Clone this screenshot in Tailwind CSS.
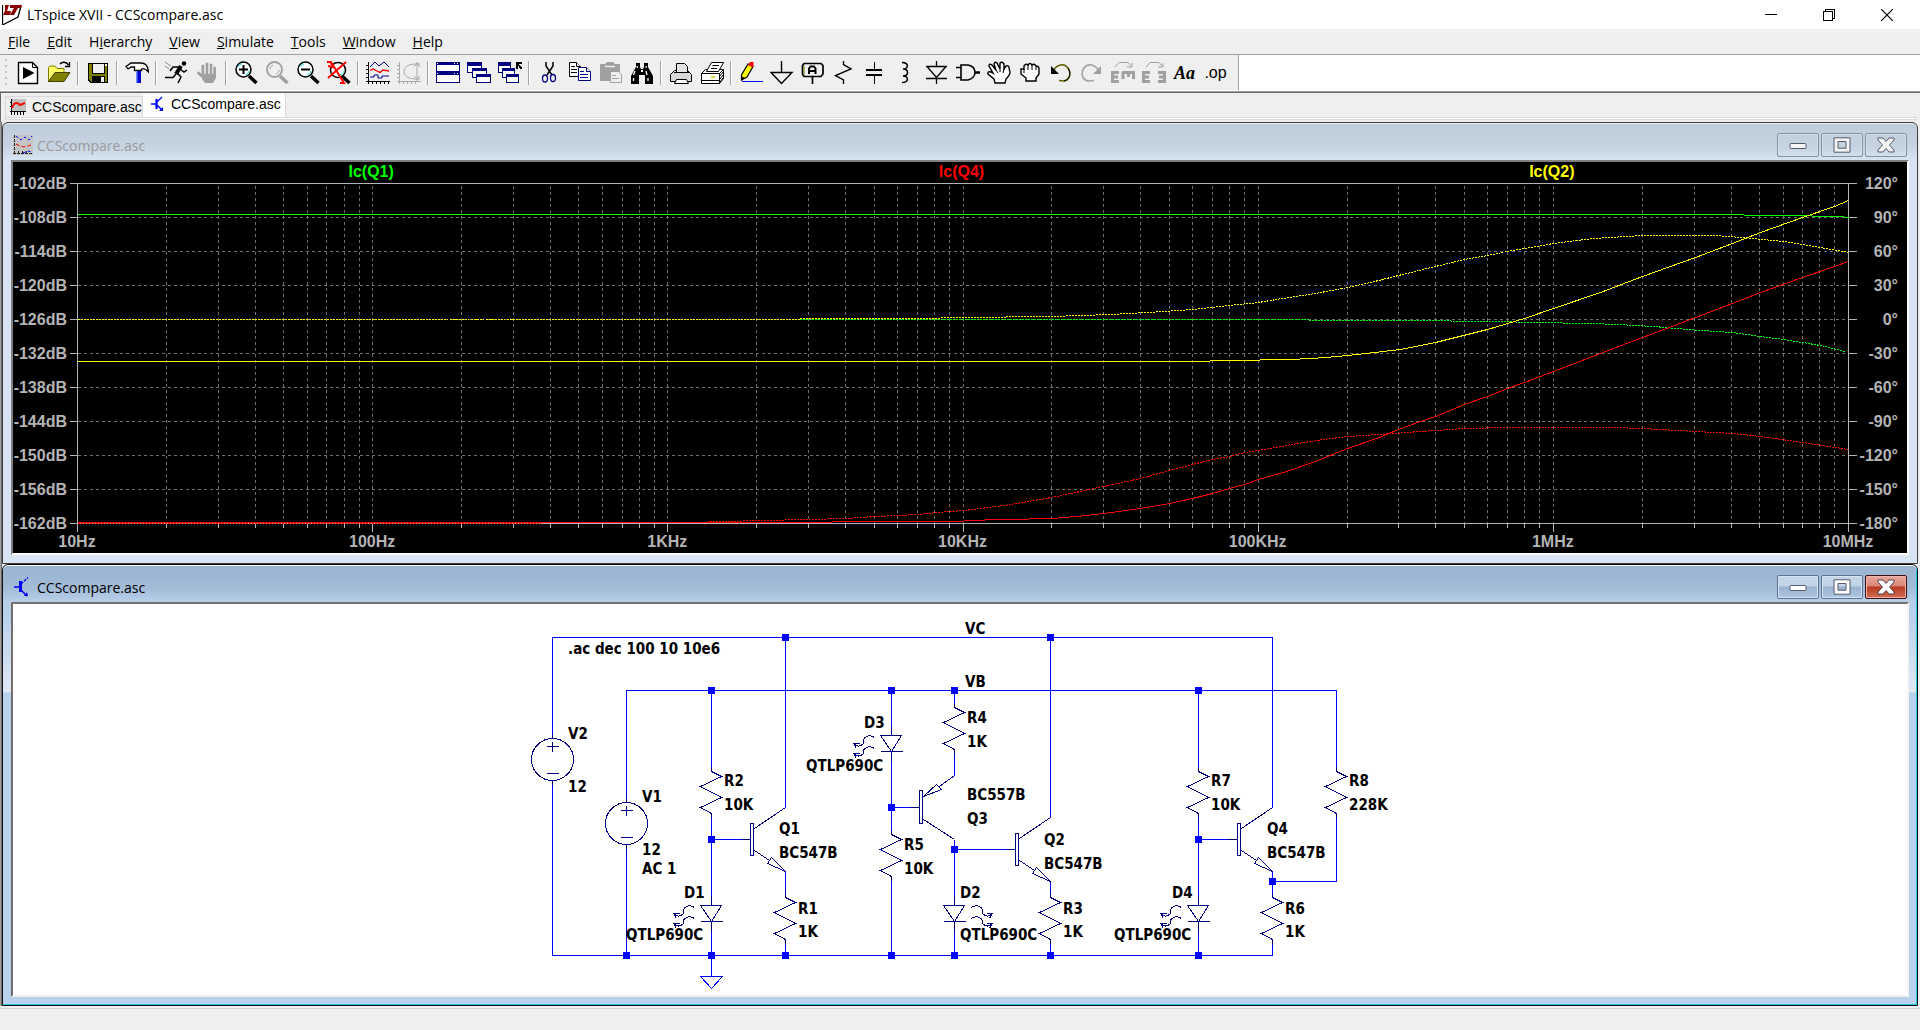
<!DOCTYPE html>
<html lang="en">
<head>
    <meta charset="UTF-8">
    <meta name="viewport" content="width=device-width, initial-scale=1.0">
    <title>LTspice XVII - CCScompare.asc</title>
    <script src="https://cdn.jsdelivr.net/npm/@tailwindcss/browser@4"></script>
</head>
<body class="h-screen flex flex-col overflow-hidden bg-[#efefef] text-black text-[14px] font-['Open_Sans','Noto_Sans',sans-serif]">

    <!-- Title bar -->
    <header class="h-[29px] shrink-0 bg-white flex items-center pl-[2px]">
        <svg class="w-5 h-5" viewBox="0 0 20 20">
            <path d="M.5 0V20L16 12 19 1" fill="none" stroke="#000" stroke-width="1.3"/>
            <path d="M3 0H7L5 6 9 6 8 10H1L3 6ZM8 0H20L19 3H16L12 10H8L12 3H8Z" fill="#8b0000"/>
        </svg>
        <h1 class="ml-[5px]">LTspice XVII - CCScompare.asc</h1>
        <div class="ml-auto mr-1 flex h-full">
            <button aria-label="Minimize" class="w-[58px] grid place-items-center"><svg class="w-3 h-3" viewBox="0 0 12 12" shape-rendering="crispEdges"><path d="M0 5.5H12" stroke="#000"/></svg></button>
            <button aria-label="Restore" class="w-[58px] grid place-items-center"><svg class="w-3 h-3" viewBox="0 0 12 12" fill="none" stroke="#000" shape-rendering="crispEdges"><path d="M.5 2.5H9.5V11.5H.5ZM2.5 2.5V.5H11.5V9.5H9.5"/></svg></button>
            <button aria-label="Close" class="w-[58px] grid place-items-center"><svg class="w-3 h-3" viewBox="0 0 12 12"><path d="M0 0L12 12M12 0L0 12" stroke="#000" stroke-width="1.2"/></svg></button>
        </div>
    </header>

    <!-- Menu -->
    <nav class="h-[26px] shrink-0 flex gap-px items-center border-b border-[#a0a0a0]">
        <button class="px-2"><u>F</u>ile</button>
        <button class="px-2"><u>E</u>dit</button>
        <button class="px-2">H<u>i</u>erarchy</button>
        <button class="px-2"><u>V</u>iew</button>
        <button class="px-2"><u>S</u>imulate</button>
        <button class="px-2"><u>T</u>ools</button>
        <button class="px-2"><u>W</u>indow</button>
        <button class="px-2"><u>H</u>elp</button>
    </nav>

    <!-- Toolbar -->
    <div class="h-[38px] shrink-0 flex border-b border-[#696969] bg-white shadow-[inset_0_-1px_#a0a0a0]">
        <div class="mb-[2px] flex items-center pl-[5px] pr-[7px] bg-[#efefef] border-r border-[#a0a0a0]">
            <div class="w-[2px] h-[27px] mr-[5px] bg-[repeating-linear-gradient(#c4c4c4_0_2px,#efefef_2px_6px)]"></div>
            <button aria-label="New" class="w-[31px] grid place-items-center"><svg class="w-6 h-6" viewBox="0 0 24 24"><path d="M2.5 1.5H16.5L21.5 6.5V22.5H2.5Z" fill="#fff" stroke="#000" stroke-width="1.4"/><path d="M16.5 1.5V6.5H21.5" fill="none" stroke="#000"/><path d="M7 6L18.500 12 7 18Z"/></svg></button>
            <button aria-label="Open" class="w-[31px] grid place-items-center"><svg class="w-6 h-6" viewBox="0 0 24 24"><path d="M1.500 20V6.500L3 5H8L10 7.500H17V12H9L1.500 21Z" fill="#ffff66" stroke="#808000"/><path d="M1.500 20.500L8 11.500H23L17 20.500Z" fill="#808000" stroke="#404000"/><path d="M13 3C15 .5 19 .5 21.500 4M22.500 1V5.500H18" fill="none" stroke="#000" stroke-width="1.300"/></svg></button>
            <div class="w-2 h-6 bg-[linear-gradient(90deg,transparent_3px,#a0a0a0_3px_4px,#fff_4px_5px,transparent_5px)]"></div>
            <button aria-label="Save" class="w-[31px] grid place-items-center"><svg class="w-6 h-6" viewBox="0 0 24 24" shape-rendering="crispEdges"><path d="M2 2H22V22H4L2 20Z"/><path d="M3 3H21V21H5L3 19Z" fill="#808000"/><path d="M6 2H18V12H6Z" stroke="#000" fill="#efefef"/><path d="M19 3H21V5H19Z" fill="#fff"/><path d="M6 15H19V22H6Z"/><path d="M15 16H18V21H15Z" fill="#efefef"/></svg></button>
            <div class="w-2 h-6 bg-[linear-gradient(90deg,transparent_3px,#a0a0a0_3px_4px,#fff_4px_5px,transparent_5px)]"></div>
            <button aria-label="Control panel" class="w-[31px] grid place-items-center"><svg class="w-6 h-6" viewBox="0 0 24 24"><path d="M1 5.500L6 2H16C20 2 23 5 23.500 11C21 8 19 7 16.500 8V9.500H9.500V6H6L3 8Z" fill="#fff" stroke="#000" stroke-width="1.300"/><path d="M11 10H16V22H11Z" fill="#0000d0"/><path d="M11 10H12.500V22H11Z" fill="#6a8cff"/></svg></button>
            <div class="w-2 h-6 bg-[linear-gradient(90deg,transparent_3px,#a0a0a0_3px_4px,#fff_4px_5px,transparent_5px)]"></div>
            <button aria-label="Run" class="w-[31px] grid place-items-center"><svg class="w-6 h-6" viewBox="0 0 24 24" fill="none" stroke="#000"><circle cx="20" cy="2.500" r="2.200" fill="#000" stroke="none"/><path d="M17 5L12 13" stroke-width="4"/><path d="M16 6L9 6 6 10M16 8L20 11 23 9M13 12L17 16 14 22M12 13L9 16.500 1 16.500" stroke-width="1.500"/><path d="M1 1L7 5M1 5L5 8" stroke="#909090"/></svg></button>
            <button aria-label="Halt" class="w-[31px] grid place-items-center"><svg class="w-6 h-6" viewBox="0 0 24 24" fill="none" stroke="#a0a0a0" stroke-width="3" stroke-linecap="round"><path d="M8 12V5M12 11V3M16 11V4M19.500 12V7M3.500 12L8 16"/><path d="M7 12H21V17L18 22H10L7 18Z" fill="#a0a0a0" stroke="none"/><path d="M10 5V13M14 4V13M17.800 6V13" stroke="#efefef" stroke-width="1"/></svg></button>
            <div class="w-2 h-6 bg-[linear-gradient(90deg,transparent_3px,#a0a0a0_3px_4px,#fff_4px_5px,transparent_5px)]"></div>
            <button aria-label="Zoom in" class="w-[31px] grid place-items-center"><svg class="w-6 h-6" viewBox="0 0 24 24" fill="none" stroke="#000"><path d="M15 15L22.500 22" stroke-width="3.500"/><circle cx="9.500" cy="8.500" r="7.500" fill="#fff" stroke-width="1.500"/><path d="M4 6C5 4 6 3 8 3M11 14C13 13.500 14.500 12 15 10" stroke="#00e0e0"/><path d="M5 8.500H14M9.500 4V13" stroke-width="2"/></svg></button>
            <button aria-label="Zoom area" class="w-[31px] grid place-items-center"><svg class="w-6 h-6" viewBox="0 0 24 24" fill="none" stroke="#a0a0a0"><path d="M15 15L22.500 22" stroke-width="3.500"/><circle cx="9.500" cy="8.500" r="7.500" stroke-width="1.800"/><path d="M5 8C5 6 6 5 8 4M11 13C13 12 14 11 14 9"/></svg></button>
            <button aria-label="Zoom out" class="w-[31px] grid place-items-center"><svg class="w-6 h-6" viewBox="0 0 24 24" fill="none" stroke="#000"><path d="M15 15L22.500 22" stroke-width="3.500"/><circle cx="9.500" cy="8.500" r="7.500" fill="#fff" stroke-width="1.500"/><path d="M4 6C5 4 6 3 8 3M11 14C13 13.500 14.500 12 15 10" stroke="#00e0e0"/><path d="M5 8.500H14" stroke-width="2"/></svg></button>
            <button aria-label="Zoom full extents" class="w-[31px] grid place-items-center"><svg class="w-6 h-6" viewBox="0 0 24 24" fill="none" stroke="#000"><path d="M15 15L22.500 22" stroke-width="3.500"/><circle cx="11" cy="9" r="7.500" fill="#fff" stroke-width="1.500"/><path d="M13 14C15 13.500 16.500 12 17 10" stroke="#00e0e0"/><path d="M0 1H4L17 22H13M19 1L10 9 1 17M3 0L6 6 1 5" stroke="#f00" stroke-width="2"/></svg></button>
            <div class="w-2 h-6 bg-[linear-gradient(90deg,transparent_3px,#a0a0a0_3px_4px,#fff_4px_5px,transparent_5px)]"></div>
            <button aria-label="Autorange" class="w-[31px] grid place-items-center"><svg class="w-6 h-6" viewBox="0 0 24 24" fill="none"><path d="M2.500 1V23M0 20.500H24M0 4.500H3M0 8.500H3M0 12.500H3M0 16.500H3M6.500 20V23M10.500 20V23M14.500 20V23M18.500 20V23M22.500 20V23" stroke="#000" shape-rendering="crispEdges"/><path d="M4 6L9 1 13 5 18 1 23 6M4 16H8V14H12V17H16V15H23" stroke="#000090"/><path d="M4 9.500L7 8 14 11.500 17 9 23 10" stroke="#f00" stroke-width="1.300"/></svg></button>
            <button aria-label="Nyquist" class="w-[31px] grid place-items-center"><svg class="w-6 h-6" viewBox="0 0 24 24" fill="none" stroke="#a8a8a8"><path d="M2.500 1V23M0 20.500H24M0 4.500H3M0 8.500H3M0 12.500H3M0 16.500H3M6.500 20V23M10.500 20V23M14.500 20V23M18.500 20V23" shape-rendering="crispEdges"/><path d="M23 3H19C10 3 7 7 7 10.500C7 14 10 18 19 18H23M20 1V20M17 6L20 2 23 6M17 15L20 18 23 15" /></svg></button>
            <div class="w-2 h-6 bg-[linear-gradient(90deg,transparent_3px,#a0a0a0_3px_4px,#fff_4px_5px,transparent_5px)]"></div>
            <button aria-label="Tile windows" class="w-[31px] grid place-items-center"><svg class="w-6 h-6" viewBox="0 0 24 24" shape-rendering="crispEdges"><path d="M.5 1.500H23.500V10.500H.5ZM.5 11.500H23.500V21.500H.5Z" fill="#fff" stroke="#000080"/><path d="M1 2H23V4H1ZM1 11H23V14H1Z" fill="#000080"/><path d="M1 2H2V3H1ZM18 2H19V3H18ZM21 2H22V3H21ZM1 12H2V13H1ZM18 12H19V13H18ZM21 12H22V13H21Z" fill="#fff"/></svg></button>
            <button aria-label="Cascade windows" class="w-[31px] grid place-items-center"><svg class="w-6 h-6" viewBox="0 0 24 24" fill="#fff" stroke="#000080" shape-rendering="crispEdges"><path d="M.5 1.500H14.500V11.500H.5Z"/><path d="M1 3H14" stroke-width="3"/><path d="M5.500 7.500H19.500V16.500H5.500Z"/><path d="M6 8.500H19" stroke-width="3"/><path d="M9.500 13.500H23.500V21.500H9.500Z"/><path d="M10 14.500H23" stroke-width="3"/></svg></button>
            <button aria-label="Close all windows" class="w-[31px] grid place-items-center"><svg class="w-6 h-6" viewBox="0 0 24 24" fill="#fff" stroke="#000080" shape-rendering="crispEdges"><path d="M.5 1.500H12.500V11.500H.5Z"/><path d="M1 3H12" stroke-width="3"/><path d="M4.500 7.500H16.500V16.500H4.500Z"/><path d="M5 8.500H16" stroke-width="3"/><path d="M8.500 13.500H20.500V21.500H8.500Z"/><path d="M9 14.500H20" stroke-width="3"/><path d="M18.500 8V1.500H24M18.500 1.500L24 8" fill="none" stroke="#000" stroke-width="2"/></svg></button>
            <div class="w-2 h-6 bg-[linear-gradient(90deg,transparent_3px,#a0a0a0_3px_4px,#fff_4px_5px,transparent_5px)]"></div>
            <button aria-label="Cut" class="w-[31px] grid place-items-center"><svg class="w-6 h-6" viewBox="0 0 24 24" fill="none"><path d="M9 1V5L15 14M16 1V5L10 14" stroke="#000" stroke-width="1.500"/><ellipse cx="8" cy="17.500" rx="2.500" ry="3.500" stroke="#000080" stroke-width="1.300"/><ellipse cx="16" cy="17" rx="2.500" ry="3.500" stroke="#000080" stroke-width="1.300"/></svg></button>
            <button aria-label="Copy" class="w-[31px] grid place-items-center"><svg class="w-6 h-6" viewBox="0 0 24 24" fill="#fff" stroke="#000"><path d="M1.500 1.500H8.500L12.500 5.500V15.500H1.500Z"/><path d="M8.500 1.500V5.500H12.500M3 5.500H7M3 8.500H9M3 11.500H9"/><path d="M10.500 6.500H18.500L22.500 10.500V19.500H10.500Z" stroke="#000080"/><path d="M18.500 6.500V10.500H22.500M12 10.500H16M12 13.500H20M12 16.500H20" stroke="#000080"/></svg></button>
            <button aria-label="Paste" class="w-[31px] grid place-items-center"><svg class="w-6 h-6" viewBox="0 0 24 24"><path d="M1 4Q1 3 2 3H6L8 1H14L16 3H20Q21 3 21 4V20H1Z" fill="#a0a0a0"/><path d="M6 5.500H16" stroke="#efefef" stroke-width="1.500"/><path d="M11.500 10.500H19.500L22.500 13.500V21.500H11.500Z" fill="#efefef" stroke="#a0a0a0"/><path d="M13 14.500H17M13 17.500H20" stroke="#a0a0a0"/></svg></button>
            <button aria-label="Find" class="w-[31px] grid place-items-center"><svg class="w-6 h-6" viewBox="0 0 24 24"><path d="M6 2H10V6L11 8H13L14 6V2H18V6L23 15V23H15V14H9V23H1V15L6 6Z"/><path d="M6.500 6H8M15.500 6H17M5 10L3.500 14M16 10L17 14M3.500 17V20M18 17V20" stroke="#fff" stroke-width="1.300"/><path d="M11 9H13V11H11Z" fill="#fff"/></svg></button>
            <div class="w-2 h-6 bg-[linear-gradient(90deg,transparent_3px,#a0a0a0_3px_4px,#fff_4px_5px,transparent_5px)]"></div>
            <button aria-label="Print" class="w-[31px] grid place-items-center"><svg class="w-6 h-6" viewBox="0 0 24 24" fill="#fff" stroke="#000"><path d="M1.500 13.500L5.500 9.500H18.500L22.500 13.500V20.500H1.500Z" fill="#d8d8d8"/><path d="M7.500 11.500V2.500H15.500L18.500 5.500V11.500Z" fill="#e4e4e4"/><path d="M5 11.500H20"/><path d="M5.500 22.500L7.500 18.500H17.500L19.500 22.500Z"/></svg></button>
            <button aria-label="Print setup" class="w-[31px] grid place-items-center"><svg class="w-6 h-6" viewBox="0 0 24 24" fill="#fff" stroke="#000"><path d="M1.500 12.500L5.500 8.500H23.500V17.500L19.500 22.500H1.500Z"/><path d="M19.500 12.500V22.500M1.500 12.500H19.500L23.500 8.500M1.500 19.500H19.500M20 18L23 14M20 21L23 17M20 15L23 11"/><path d="M6.500 10.500L11.500 1.500H23.500L18.500 10.500Z"/><path d="M12.500 4.500H19M11 7.500H17"/><path d="M11 16H15" stroke="#e0d800" stroke-width="1.500"/></svg></button>
            <div class="w-2 h-6 bg-[linear-gradient(90deg,transparent_3px,#a0a0a0_3px_4px,#fff_4px_5px,transparent_5px)]"></div>
            <button aria-label="Wire" class="w-[31px] grid place-items-center"><svg class="w-6 h-6" viewBox="0 0 24 24"><path d="M2.500 19V14L9 3 14 5.500 8 16Z" fill="#ff0" stroke="#000" stroke-width="1.200"/><path d="M2 20V15L6 17Z"/><path d="M9 4L11 1H14.500V5L13.500 6.500Z" fill="#f00"/><path d="M3 20.500H24" stroke="#00f" shape-rendering="crispEdges"/></svg></button>
            <button aria-label="Ground" class="w-[31px] grid place-items-center"><svg class="w-6 h-6" viewBox="0 0 24 24" fill="none" stroke="#000" stroke-width="1.400"><path d="M11.500 0V11.500M1 11.500H22L11.500 22.500Z"/></svg></button>
            <button aria-label="Label net" class="w-[31px] grid place-items-center"><svg class="w-6 h-6" viewBox="0 0 24 24" fill="none" stroke="#000"><path d="M3 2.500H20L22 4.500V13L20 15.500H3L1.500 13V4.500ZM11.500 15.500V23" stroke-width="1.700"/><path d="M3 4.500V14" stroke="#808000"/><path d="M8 13V7.500L9.500 5.500H13L14.500 7.500V13M8 10H14.500" stroke-width="2"/></svg></button>
            <button aria-label="Resistor" class="w-[31px] grid place-items-center"><svg class="w-6 h-6" viewBox="0 0 24 24" fill="none" stroke="#000" stroke-width="1.400"><path d="M11.500 0V3.500L19 8 3.500 14.500 11.500 19V23"/></svg></button>
            <button aria-label="Capacitor" class="w-[31px] grid place-items-center"><svg class="w-6 h-6" viewBox="0 0 24 24" fill="none" stroke="#000" shape-rendering="crispEdges"><path d="M11.500 1V9M11.500 15V23"/><path d="M3 9H19M3 14H19" stroke-width="2"/></svg></button>
            <button aria-label="Inductor" class="w-[31px] grid place-items-center"><svg class="w-6 h-6" viewBox="0 0 24 24" fill="none" stroke="#000" stroke-width="1.500"><path d="M8 1.500C15 1.500 15 8 9 8C15 8 15 15 9 15C15 15 15 21.500 8 21.500"/></svg></button>
            <button aria-label="Diode" class="w-[31px] grid place-items-center"><svg class="w-6 h-6" viewBox="0 0 24 24" fill="none" stroke="#000" stroke-width="1.300"><path d="M11.500 0V5.500M1 5.500H22M2 5.500L11.500 16.500 21 5.500M1 17.500H22M11.500 17V23"/></svg></button>
            <button aria-label="Component" class="w-[31px] grid place-items-center"><svg class="w-6 h-6" viewBox="0 0 24 24" fill="none" stroke="#000" stroke-width="1.600"><path d="M5 4H12C17 5 19 8 19 11.500C19 15 16 18 12 19H5ZM0 6.500H5M0 16.500H5"/><path d="M19 11.500H24" stroke-width="2.500"/></svg></button>
            <button aria-label="Move" class="w-[31px] grid place-items-center"><svg class="w-6 h-6" viewBox="0 0 24 24"><path d="M8 22L7 18 1 13Q0 10 4 11L6 12 2 5Q2 2 5 4L9 9 7 3Q8 0 10 2L13 8 13 2Q15 0 17 3L17 8 19 5Q22 4 22 7L23 11Q23 14 19 18L18 22Z" fill="#fff" stroke="#000" stroke-width="1.400"/><path d="M9 9L11 12M13 8V11M17 8L16 12" stroke="#000"/></svg></button>
            <button aria-label="Drag" class="w-[31px] grid place-items-center"><svg class="w-6 h-6" viewBox="0 0 24 24"><path d="M8 20V17L3 13V8H6V5Q8 2 10 4Q12 1 14 4Q16 2 18 5Q21 5 21 8V13L18 17V20Z" fill="#fff" stroke="#000" stroke-width="1.400"/><path d="M6 8V12M10 4V9M14 4V9M18 5V9" stroke="#000"/></svg></button>
            <button aria-label="Undo" class="w-[31px] grid place-items-center"><svg class="w-6 h-6" viewBox="0 0 24 24" fill="none" stroke="#000"><path d="M4 10C8 3 15 2 19 7C23 13 20 19 15 20L10 19.500" stroke="#606000" stroke-width="1.500"/><path d="M19 7C23 13 20 19 15 20"/><path d="M2 5V13H10Z" fill="#000" stroke="none"/></svg></button>
            <button aria-label="Redo" class="w-[31px] grid place-items-center"><svg class="w-6 h-6" viewBox="0 0 24 24" fill="none" stroke="#a0a0a0"><path d="M19 10C15 3 8 2 4 7C0 13 3 19 8 20L14 19.500" stroke-width="1.500"/><path d="M21 5V13H13Z" fill="#a0a0a0" stroke="none"/></svg></button>
            <button aria-label="Rotate" class="w-[31px] grid place-items-center"><svg class="w-6 h-6" viewBox="0 0 24 24" fill="none" stroke="#a0a0a0"><path d="M4 6L8 1.500H17L20.500 5.500M21 2V6H16" /><path d="M8 11.500H1.500V20.500H8M1.500 16H7M11 11.500H24M12 11V18M17.500 11V16M22.500 11V18" stroke-width="3"/></svg></button>
            <button aria-label="Mirror" class="w-[31px] grid place-items-center"><svg class="w-6 h-6" viewBox="0 0 24 24" fill="none" stroke="#a0a0a0"><path d="M4 6L8 1.500H17L20.500 5.500M21 2V6H16" /><path d="M8 11.500H1.500V20.500H8M1.500 16H7M16 11.500H22.500V20.500H16M22.500 16H17" stroke-width="3"/></svg></button>
            <button aria-label="Text" class="w-[31px] text-[18px] leading-6 font-bold italic font-['Liberation_Serif',serif]">Aa</button>
            <button aria-label="SPICE directive" class="w-[31px] text-[16px] leading-6 font-['Liberation_Sans',sans-serif]">.op</button>
        </div>
    </div>

    <!-- Document tabs -->
    <div class="h-[29px] shrink-0 flex flex-col pl-[4px] pr-1 border-l border-[#696969] font-['Liberation_Sans',sans-serif]">
        <div class="flex items-end h-6 pt-px">
            <button class="w-[138px] h-[21px] pl-1 flex items-center gap-[6px] border border-b-0 border-[#d9d9d9]">
                <svg class="w-4 h-4" viewBox="0 0 16 16"><path d="M2 0H16V12H2Z" fill="#c0c0c0"/><path d="M1.500 0V16M0 12.500H16M4.500 12V16M7.500 12V16M10.500 12V16M13.500 12V16M0 3.500H2M0 7.500H2" stroke="#000" shape-rendering="crispEdges"/><path d="M2 9C4 3 7 3 10 6L15 4" fill="none" stroke="#f00" stroke-width="2"/></svg>
                CCScompare.asc
            </button>
            <button class="w-[143px] h-[23px] pb-[3px] pl-2 flex items-center gap-1 bg-white border-r border-[#d9d9d9]">
                <svg class="w-4 h-4" viewBox="0 0 16 16" fill="none" stroke="#00f"><path d="M0 8H5M6 9L11 14" stroke-width="1.500"/><path d="M5.500 3V13" stroke-width="2.200"/><path d="M6 6L11 1" stroke-width="1.300"/><path d="M12 15V11L8 15Z" fill="#00f" stroke="none"/></svg>
                CCScompare.asc
            </button>
        </div>
        <div class="h-[3px] border border-[#d9d9d9] bg-white"></div>
    </div>

    <!-- MDI area -->
    <main class="flex-1 min-h-0 flex flex-col px-[2px] shadow-[inset_1px_0_#a0a0a0,inset_2px_0_#696969]">

        <!-- Waveform window -->
        <section class="flex-1 min-h-0 flex flex-col border border-[#3c3c3c] rounded-t-md px-2 pb-2 bg-[linear-gradient(#bfcddb,#c6d3e1_24px,#d7e4f2_37px)] shadow-[inset_0_1px_#e8f0f8]">
            <div class="h-[37px] shrink-0 flex items-center pt-2 pb-px pl-[2px] pr-[2px]">
                <svg class="w-5 h-5" viewBox="0 0 20 20"><path d="M0 0H20V20H0Z" fill="#c4c4c4"/><path d="M1.500 0V20M0 18.500H20M5.500 16V20M9.500 16V20M13.500 16V20" stroke="#222" stroke-dasharray="3 1" shape-rendering="crispEdges"/><path d="M3 1L8 5 12 2 16 5 19 1M10 18L15 16 19 17" fill="none" stroke="#00f" stroke-dasharray="3 2"/><path d="M3 9L7 11 11 12 18 10" fill="none" stroke="#f00" stroke-dasharray="4 2"/></svg>
                <h2 class="ml-1 text-[#9a9a9a]">CCScompare.asc</h2>
                <div class="ml-auto flex gap-[2px]">
                    <button aria-label="Minimize" class="w-[42px] h-6 grid place-items-center rounded-[2px] border border-[#8492a8] shadow-[inset_0_0_0_1px_#d5dfea]"><svg class="w-[18px] h-4" viewBox="0 0 18 16"><rect x="1" y="6.500" width="16" height="5" rx=".8" fill="#f4f4f4" stroke="#555b6b"/></svg></button>
                    <button aria-label="Maximize" class="w-[42px] h-6 grid place-items-center rounded-[2px] border border-[#8492a8] shadow-[inset_0_0_0_1px_#d5dfea]"><svg class="w-[18px] h-4" viewBox="0 0 18 16"><path fill-rule="evenodd" d="M1 .8H17V15.200H1ZM5 4.500V11.200H13V4.500Z" fill="#f4f4f4" stroke="#555b6b"/></svg></button>
                    <button aria-label="Close" class="w-[42px] h-6 grid place-items-center rounded-[2px] border border-[#8492a8] shadow-[inset_0_0_0_1px_#d5dfea]"><svg class="w-[18px] h-4" viewBox="0 0 18 16"><path d="M1 1H6L9 4.500 12 1H17V3L12.500 8 17 13V15H12L9 11.500 6 15H1V13L5.500 8 1 3Z" fill="#f4f4f4" stroke="#555b6b" stroke-linejoin="round"/></svg></button>
                </div>
            </div>
            <div id="plot-pane" class="flex-1 min-h-0 border-2 border-t-[#808080] border-l-[#808080] border-r-white border-b-white bg-black">
                <svg id="plot" class="block w-full h-full font-bold text-[16px] font-['Liberation_Sans',sans-serif]"></svg>
            </div>
        </section>

        <!-- Schematic window -->
        <section class="flex-1 min-h-0 flex flex-col border border-[#101010] rounded-t-md px-2 pb-2 bg-[linear-gradient(#9ab4d1,#a3bcd8_24px,#b9d0ea_37px,#b9d0ea_50px,#dfe9f6_127px,#b9d1ea_128px)] shadow-[inset_0_1px_#fff,inset_-1px_-1px_#22c8e8]">
            <div class="h-[37px] shrink-0 flex items-center pt-2 pb-px pl-[2px] pr-[2px]">
                <svg class="w-5 h-5" viewBox="0 0 20 20" fill="none" stroke="#00f"><path d="M1 10H6M7 12L14 19" stroke-width="1.500"/><path d="M7.500 4V15" stroke-width="3"/><path d="M8 7L15 .5" stroke-width="1.300" stroke-dasharray="3 1"/><path d="M15 19H11L14 15Z" fill="#00f" stroke="none"/></svg>
                <h2 class="ml-1">CCScompare.asc</h2>
                <div class="ml-auto flex gap-[2px]">
                    <button aria-label="Minimize" class="w-[42px] h-6 grid place-items-center rounded-[2px] border border-[#5e7390] bg-[linear-gradient(#c2d4e8_45%,#9bb3cf_50%,#adc6e2)] shadow-[inset_0_0_0_1px_#d5e3f2]"><svg class="w-[18px] h-4" viewBox="0 0 18 16"><rect x="1" y="6.500" width="16" height="5" rx=".8" fill="#fff" stroke="#555b6b"/></svg></button>
                    <button aria-label="Maximize" class="w-[42px] h-6 grid place-items-center rounded-[2px] border border-[#5e7390] bg-[linear-gradient(#c2d4e8_45%,#9bb3cf_50%,#adc6e2)] shadow-[inset_0_0_0_1px_#d5e3f2]"><svg class="w-[18px] h-4" viewBox="0 0 18 16"><path fill-rule="evenodd" d="M1 .8H17V15.200H1ZM5 4.500V11.200H13V4.500Z" fill="#fff" stroke="#555b6b"/></svg></button>
                    <button aria-label="Close" class="w-[42px] h-6 grid place-items-center rounded-[2px] border border-[#430c12] bg-[linear-gradient(#e9a69b,#d98778_45%,#b83c25_50%,#cf6b50)] shadow-[inset_0_0_0_1px_#eab5ab]"><svg class="w-[18px] h-4" viewBox="0 0 18 16"><path d="M1 1H6L9 4.500 12 1H17V3L12.500 8 17 13V15H12L9 11.500 6 15H1V13L5.500 8 1 3Z" fill="#fff" stroke="#4e4350" stroke-linejoin="round"/></svg></button>
                </div>
            </div>
            <div class="flex-1 min-h-0 border-2 border-t-[#746f6f] border-l-[#746f6f] border-r-[#f4f4f4] border-b-[#f0f0f0] bg-white">
                <svg class="block h-full w-[900px] mx-auto text-[15px] font-bold font-['DejaVu_Sans_Condensed','DejaVu_Sans',sans-serif]" viewBox="510 604 900 391">
                    <defs>
                        <g id="res"><path d="M0-5V0L10 5-11 15 10 26-11 36 0 42V47"/></g>
                        <g id="diode"><path d="M0-10V0M-11 0H10L0 16ZM-11 16H11M0 16V26"/></g>
                        <g id="rays">
                            <path d="M-17 2Q-21-1-25 1T-28 8Q-33 13-38 8M-32 8H-38L-35 13"/>
                            <path d="M-17 13Q-21 10-25 12T-28 18Q-33 23-38 18M-32 18H-38L-35 23"/>
                        </g>
                        <!-- origin: emitter x, base y -->
                        <g id="npn"><path d="M-45 0H-35M-35-16H-32V16H-35ZM-31-11L0-32M-31 11L-16 21M0 32L-18 24-14 18Z"/></g>
                        <g id="pnp"><path d="M-45 0H-35M-35-17H-32V16H-35ZM-31 12L0 32M0-32L-15-21M-31-11L-18-23-13-18Z"/></g>
                        <g id="source"><circle r="21"/><path d="M-6-13H6M0-18V-8M-6 14H6M0-26V-21M0 21V26"/></g>
                    </defs>

                    <g fill="none" shape-rendering="crispEdges" transform="translate(.5 .5)">
                        <g stroke="#0000ff">
                            <path d="M552 733V637H1272V807M552 785V955H1272V944"/>
                            <path d="M626 797V690H1336V766M626 849V955"/>
                            <path d="M711 690V766M711 817V896M711 931V976M700 976H722L711 988Z"/>
                            <path d="M785 637V807M785 871V892M785 944V955M711 839H740"/>
                            <path d="M891 690V726M891 761V829M891 881V955M891 807H910"/>
                            <path d="M954 690V702M954 754V775M954 839V896M954 931V955M954 849H1006"/>
                            <path d="M1050 637V817M1050 881V892M1050 944V955"/>
                            <path d="M1198 690V766M1198 817V896M1198 931V955M1198 839H1228"/>
                            <path d="M1272 871V892M1336 817V881H1272"/>
                        </g>
                        <g stroke="#000080">
                            <use href="#source" x="552" y="759"/>
                            <use href="#source" x="626" y="823"/>
                            <use href="#res" x="711" y="771"/>
                            <use href="#res" x="785" y="897"/>
                            <use href="#res" x="891" y="834"/>
                            <use href="#res" x="954" y="707"/>
                            <use href="#res" x="1050" y="897"/>
                            <use href="#res" x="1198" y="771"/>
                            <use href="#res" x="1272" y="897"/>
                            <use href="#res" x="1336" y="771"/>
                            <use href="#diode" x="711" y="905"/>
                            <use href="#rays" x="711" y="905"/>
                            <use href="#diode" x="891" y="735"/>
                            <use href="#rays" x="891" y="735"/>
                            <use href="#diode" x="954" y="905"/>
                            <use href="#rays" transform="translate(954 905) scale(-1 1)"/>
                            <use href="#diode" x="1198" y="905"/>
                            <use href="#rays" x="1198" y="905"/>
                            <use href="#npn" x="785" y="839"/>
                            <use href="#npn" x="1050" y="849"/>
                            <use href="#npn" x="1272" y="839"/>
                            <use href="#pnp" x="954" y="807"/>
                        </g>
                        <!-- junctions: zero-length strokes with square caps -->
                        <path stroke="#0000ff" stroke-width="7" stroke-linecap="square" d="M785 637h0M1050 637h0M711 690h0M891 690h0M954 690h0M1198 690h0M711 839h0M891 807h0M954 849h0M1198 839h0M1272 881h0M626 955h0M711 955h0M785 955h0M891 955h0M954 955h0M1050 955h0M1198 955h0"/>
                    </g>

                    <g fill="#000">
                        <text x="965" y="634">VC</text>
                        <text x="965" y="687">VB</text>
                        <text x="568" y="654">.ac dec 100 10 10e6</text>
                        <text x="568" y="739">V2</text>
                        <text x="568" y="792">12</text>
                        <text x="642" y="802">V1</text>
                        <text x="642" y="855">12</text>
                        <text x="642" y="874">AC 1</text>
                        <text x="724" y="786">R2</text>
                        <text x="724" y="810">10K</text>
                        <text x="779" y="834">Q1</text>
                        <text x="779" y="858">BC547B</text>
                        <text x="684" y="898">D1</text>
                        <text x="626" y="940">QTLP690C</text>
                        <text x="798" y="914">R1</text>
                        <text x="798" y="937">1K</text>
                        <text x="864" y="728">D3</text>
                        <text x="806" y="771">QTLP690C</text>
                        <text x="904" y="850">R5</text>
                        <text x="904" y="874">10K</text>
                        <text x="967" y="723">R4</text>
                        <text x="967" y="747">1K</text>
                        <text x="967" y="800">BC557B</text>
                        <text x="967" y="824">Q3</text>
                        <text x="1044" y="845">Q2</text>
                        <text x="1044" y="869">BC547B</text>
                        <text x="960" y="898">D2</text>
                        <text x="960" y="940">QTLP690C</text>
                        <text x="1063" y="914">R3</text>
                        <text x="1063" y="937">1K</text>
                        <text x="1172" y="898">D4</text>
                        <text x="1114" y="940">QTLP690C</text>
                        <text x="1211" y="786">R7</text>
                        <text x="1211" y="810">10K</text>
                        <text x="1267" y="834">Q4</text>
                        <text x="1267" y="858">BC547B</text>
                        <text x="1285" y="914">R6</text>
                        <text x="1285" y="937">1K</text>
                        <text x="1349" y="786">R8</text>
                        <text x="1349" y="810">228K</text>
                    </g>
                </svg>
            </div>
        </section>
    </main>

    <!-- Status bar -->
    <footer class="h-6 shrink-0 pt-[2px]"><div class="border-t border-[#d4d4d4]"></div></footer>

    <script>
        // Trace samples: x 77 (10Hz) to 1848 (10MHz), y 183 (top) to 523 (bottom)
        var traces = [
            { color: '#00ff00', dotted: false, pts: '77,214 1743,214 1744,215 1811,215 1812,216 1843,216 1844,217 1848,217' },
            { color: '#00ff00', dotted: true, pts: '799,319 1308,319 1309,320 1450,320 1451,321 1515,321 1516,322 1561,322 1562,323 1591,323 1617,324 1653,326 1700,330 1732,332 1760,336 1783,339 1802,342 1820,345 1845,351' },
            { color: '#ff0000', dotted: false, pts: '77,522 831,522 832,521 963,521 964,520 1006,519 1051,518 1076,516 1103,513 1140,508 1169,503 1192,498 1212,493 1229,488 1244,484 1258,479 1286,471 1315,461 1347,448 1379,437 1398,429 1420,421 1435,416 1464,404 1487,396 1507,388 1524,382 1553,371 1600,353 1642,337 1695,317 1732,303 1760,292 1802,277 1834,266 1848,261' },
            { color: '#ff0000', dotted: true, pts: '77,523 540,523 541,522 690,522 760,520 808,519 845,518 874,516 897,515 917,514 949,511 964,510 1004,505 1051,497 1103,486 1140,478 1169,470 1192,464 1212,459 1229,456 1244,452 1258,450 1286,445 1315,440 1347,436 1379,434 1420,431 1435,430 1464,428 1507,427 1613,427 1642,428 1695,431 1733,433 1760,436 1802,442 1848,449' },
            { color: '#ffff00', dotted: false, pts: '77,361 1209,361 1210,360 1259,360 1260,359 1289,359 1310,358 1325,357 1347,355 1374,352 1400,349 1435,342 1487,329 1524,318 1553,308 1600,292 1642,276 1695,257 1732,243 1760,232 1802,217 1834,206 1848,200' },
            { color: '#ffff00', dotted: true, pts: '77,319 799,319 800,318 940,318 941,317 1005,317 1006,316 1049,316 1083,315 1109,314 1147,312 1192,309 1229,305 1258,302 1282,298 1315,293 1347,287 1370,282 1398,275 1435,266 1464,259 1487,255 1507,251 1524,248 1553,243 1593,238 1642,235 1713,235 1742,237 1783,241 1820,247 1848,252' }
        ];
        var freqs = ['10Hz', '100Hz', '1KHz', '10KHz', '100KHz', '1MHz', '10MHz'];

        function line(x1, y1, x2, y2, attrs) {
            return '<path d="M' + x1 + ' ' + y1 + 'L' + x2 + ' ' + y2 + '" ' + attrs + '/>';
        }

        function drawPlot() {
            var svg = document.getElementById('plot');
            var pane = document.getElementById('plot-pane');
            var w = pane.clientWidth, h = pane.clientHeight;
            if (w < 200 || h < 100) return;
            svg.setAttribute('viewBox', '13 162 ' + w + ' ' + h);
            var left = 77, right = w - 46, top = 183, bottom = h + 132;
            var sx = (right - left) / 1771, sy = (bottom - top) / 340;
            var grid = 'stroke="#707070" stroke-dasharray="3 3"', axis = 'stroke="#b4b4b4"';
            var g = '', t = '';

            for (var d = 0; d < 6; d++) {
                for (var n = 2; n <= 10; n++) {
                    var x = Math.round(left + (right - left) * (d + Math.log10(n)) / 6);
                    if (x < right) g += line(x, top + 2, x, bottom, grid);
                    g += line(x, bottom, x, bottom + (n === 10 ? 8 : 4), axis);
                }
            }
            for (var i = 0; i <= 10; i++) {
                var y = Math.round(top + (bottom - top) * i / 10);
                if (i > 0 && i < 10) g += line(left, y, right, y, grid);
                g += line(left - 8, y, left, y, axis) + line(right, y, right + 8, y, axis);
                t += '<text x="67" y="' + (y + 6) + '" text-anchor="end">' + (-102 - 6 * i) + 'dB</text>';
                t += '<text x="' + (right + 50) + '" y="' + (y + 6) + '" text-anchor="end">' + (120 - 30 * i) + '°</text>';
            }
            g += '<path d="M' + left + ' ' + (bottom + 8) + 'V' + top + 'H' + right + 'V' + (bottom + 8) + 'M' + left + ' ' + bottom + 'H' + right + '" fill="none" ' + axis + '/>';
            freqs.forEach(function (f, k) {
                t += '<text x="' + (left + (right - left) * k / 6) + '" y="' + (bottom + 24) + '" text-anchor="middle">' + f + '</text>';
            });

            traces.forEach(function (tr) {
                var pts = tr.pts.split(' ').map(function (p) {
                    var c = p.split(',');
                    return (left + (c[0] - 77) * sx) + ',' + (top + (c[1] - 183) * sy);
                }).join(' ');
                g += '<polyline points="' + pts + '" fill="none" stroke="' + tr.color + '"' + (tr.dotted ? ' stroke-dasharray="2 1"' : '') + '/>';
            });

            [['Ic(Q1)', '#00ff00'], ['Ic(Q4)', '#ff0000'], ['Ic(Q2)', '#ffff00']].forEach(function (l, k) {
                t += '<text x="' + (left - 1 + (right - left) * (2 * k + 1) / 6) + '" y="177" text-anchor="middle" fill="' + l[1] + '">' + l[0] + '</text>';
            });

            svg.innerHTML = '<g shape-rendering="crispEdges" transform="translate(.5 .5)">' + g + '</g><g fill="#b4b4b4">' + t + '</g>';
        }

        new ResizeObserver(drawPlot).observe(document.getElementById('plot-pane'));
    </script>
</body>
</html>
